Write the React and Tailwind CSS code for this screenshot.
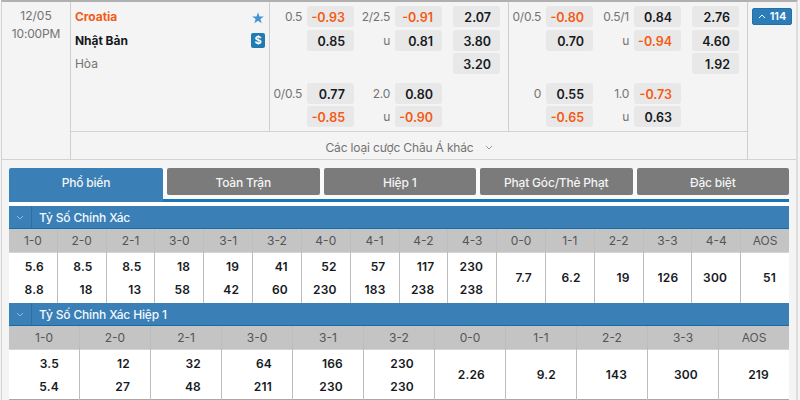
import { useState } from 'react';
import { clsx } from 'clsx';

const TABS = ['Phổ biến', 'Toàn Trận', 'Hiệp 1', 'Phạt Góc/Thẻ Phạt', 'Đặc biệt'];

const FULL_TIME = [
  ['0.5', '-0.93', '2/2.5', '-0.91', '2.07'],
  ['', '0.85', 'u', '0.81', '3.80'],
  ['', '', '', '', '3.20'],
  ['0/0.5', '0.77', '2.0', '0.80', ''],
  ['', '-0.85', 'u', '-0.90', ''],
];

const FIRST_HALF = [
  ['0/0.5', '-0.80', '0.5/1', '0.84', '2.76'],
  ['', '0.70', 'u', '-0.94', '4.60'],
  ['', '', '', '', '1.92'],
  ['0', '0.55', '1.0', '-0.73', ''],
  ['', '-0.65', 'u', '0.63', ''],
];

const CORRECT_SCORE = [
  ['1-0', '5.6', '8.8'],
  ['2-0', '8.5', '18'],
  ['2-1', '8.5', '13'],
  ['3-0', '18', '58'],
  ['3-1', '19', '42'],
  ['3-2', '41', '60'],
  ['4-0', '52', '230'],
  ['4-1', '57', '183'],
  ['4-2', '117', '238'],
  ['4-3', '230', '238'],
  ['0-0', '7.7'],
  ['1-1', '6.2'],
  ['2-2', '19'],
  ['3-3', '126'],
  ['4-4', '300'],
  ['AOS', '51'],
];

const CORRECT_SCORE_HALF = [
  ['1-0', '3.5', '5.4'],
  ['2-0', '12', '27'],
  ['2-1', '32', '48'],
  ['3-0', '64', '211'],
  ['3-1', '166', '230'],
  ['3-2', '230', '230'],
  ['0-0', '2.26'],
  ['1-1', '9.2'],
  ['2-2', '143'],
  ['3-3', '300'],
  ['AOS', '219'],
];

function Chevron({ up, className }) {
  return (
    <svg viewBox="0 0 8 5" className={className} fill="none" stroke="currentColor" strokeWidth="1">
      <path d={up ? 'M1 4 L4 1 L7 4' : 'M1 1 L4 4 L7 1'} />
    </svg>
  );
}

function Price({ value }) {
  if (!value) return <span />;
  return (
    <button
      className={clsx(
        'flex h-[21px] items-center justify-end rounded-[3px] bg-[#e8e8e8] pt-[2px] pr-[9px] text-[12.5px] leading-[19px] font-semibold',
        value.startsWith('-') ? 'text-[#f45a14]' : 'text-[#16191d]'
      )}
    >
      {value}
    </button>
  );
}

function Label({ children }) {
  return (
    <span className="pt-px pr-[5px] text-right text-[12px] tracking-[-0.25px] text-[#737373]">
      {children}
    </span>
  );
}

function OddsGroup({ rows }) {
  return (
    <div className="w-[239px] shrink-0 border-r border-[#cfcfcf] pt-[3px]">
      {rows.map(([handicap, hPrice, line, lPrice, win], i) => (
        <div
          key={i}
          className={clsx(
            'grid h-[23.5px] grid-cols-[37px_47px_41px_47px_11px_47px] items-center',
            i === 3 && 'mt-[6px]'
          )}
        >
          <Label>{handicap}</Label>
          <Price value={hPrice} />
          <Label>{line}</Label>
          <Price value={lPrice} />
          <span />
          <Price value={win} />
        </div>
      ))}
    </div>
  );
}

function ScoreTable({ title, scores, wide }) {
  return (
    <section className="w-[780px]">
      <div className="flex h-[23px] items-center border-b border-[#146da6] bg-[#3a7fb6] text-[#f3f8fc]">
        <div className="flex h-full w-[23px] items-center justify-center border-r border-[#2f6f9f]">
          <Chevron className="h-[5px] w-[8px] text-[#8fbadb]" />
        </div>
        <h2 className="pt-[2px] pl-[7px] text-[12px] font-medium tracking-[-0.16px]">{title}</h2>
      </div>
      <div className="flex">
        {scores.map(([label, ...prices]) => (
          <div key={label} className="flex-1 border-r border-[#bdbdbd] last:border-r-0">
            <div className="flex h-[24px] items-center justify-center border-b border-[#d4d4d4] bg-[#c4c4c4] pt-px text-[12px] text-[#555]">
              {label}
            </div>
            <div
              className={clsx(
                'flex h-[50px] flex-col justify-center bg-white text-right text-[12px] leading-[23.5px] font-semibold tracking-[0.2px] text-[#16191d]',
                wide ? 'border-b border-[#a8a8a8] pt-px pr-[20px]' : 'pr-[13px]'
              )}
            >
              {prices.map((price, i) => (
                <span key={i}>{price}</span>
              ))}
            </div>
          </div>
        ))}
      </div>
    </section>
  );
}

export default function App() {
  const [tab, setTab] = useState(0);

  return (
    <div className="h-[400px] w-[800px] overflow-hidden bg-[#f4f4f4] pl-px font-['Inter','Noto_Sans',sans-serif]">
      <div className="h-[400px] w-[797px] border-t-2 border-r-2 border-l border-t-[#b0b0b0] border-r-[#dedede] border-l-[#d2d2d2]">
        {/* Match row */}
        <div className="flex h-[158px] border-b border-[#d2d2d2]">
          <div className="w-[69px] shrink-0 border-r border-[#cfcfcf] pt-[5px] text-center text-[12px] leading-[17.5px] text-[#737373]">
            <div>12/05</div>
            <div className="tracking-[-0.15px]">10:00PM</div>
          </div>
          <div className="w-[677px] shrink-0 border-r border-[#cfcfcf]">
            <div className="flex h-[130px] border-b border-[#d2d2d2]">
              <div className="flex w-[199px] shrink-0 justify-between border-r border-[#cfcfcf] pt-[3px] pr-[4px] pl-[4px]">
                <div className="text-[12px] leading-[23.5px] tracking-[-0.05px]">
                  <div className="font-bold text-[#f45a14]">Croatia</div>
                  <div className="font-bold text-[#16191d]">Nhật Bản</div>
                  <div className="text-[#737373]">Hòa</div>
                </div>
                <div className="flex w-[14px] flex-col items-center pt-[7px]">
                  <svg viewBox="0 0 24 24" className="h-[12px] w-[12px] fill-[#4592cf]">
                    <path d="M12 .5l2.9 8.3h8.8l-7 5.3 2.6 8.5L12 17.5l-7.3 5.1 2.6-8.5-7-5.3h8.8z" />
                  </svg>
                  <div className="mt-[9px] flex h-[15px] w-[14px] items-center justify-center rounded-[2px] bg-[#217ab2] text-[11px] font-bold text-white">
                    $
                  </div>
                </div>
              </div>
              <OddsGroup rows={FULL_TIME} />
              <OddsGroup rows={FIRST_HALF} />
            </div>
            <button className="flex h-[27px] w-full items-center justify-center gap-[11px] pt-[4px] text-[12px] tracking-[-0.17px] text-[#737373]">
              Các loại cược Châu Á khác
              <Chevron className="h-[5px] w-[8px] text-[#999]" />
            </button>
          </div>
          <div className="pt-[6px] pl-[4px]">
            <button className="flex h-[17px] w-[40px] items-center justify-center gap-[4px] rounded-[2px] border border-[#2371a8] bg-[#2b7cb7] text-[11px] font-semibold text-white">
              <Chevron up className="h-[5px] w-[8px]" />
              114
            </button>
          </div>
        </div>

        {/* Markets */}
        <div className="pt-[8px] pl-[7px]">
          <div className="flex h-[34px] w-[780px] items-start gap-[4px] border-b-[3px] border-[#1b76b8] bg-[#fafafa]">
            {TABS.map((name, i) => (
              <button
                key={name}
                onClick={() => setTab(i)}
                className={clsx(
                  'flex justify-center rounded-t-[2px] pt-[5px] text-[12px] leading-[19px] font-medium tracking-[-0.2px] text-[#f4f4f4]',
                  i === tab
                    ? '-mb-[3px] h-[34px] w-[154px] bg-[#3a7fb6]'
                    : 'h-[27px] flex-1 rounded-b-[2px] bg-[#7b7b7b]'
                )}
              >
                {name}
              </button>
            ))}
          </div>
          <div className="w-[780px] bg-white pt-[4px]">
            <ScoreTable title="Tỷ Số Chính Xác" scores={CORRECT_SCORE} />
            <ScoreTable title="Tỷ Số Chính Xác Hiệp 1" scores={CORRECT_SCORE_HALF} wide />
          </div>
        </div>
      </div>
    </div>
  );
}
